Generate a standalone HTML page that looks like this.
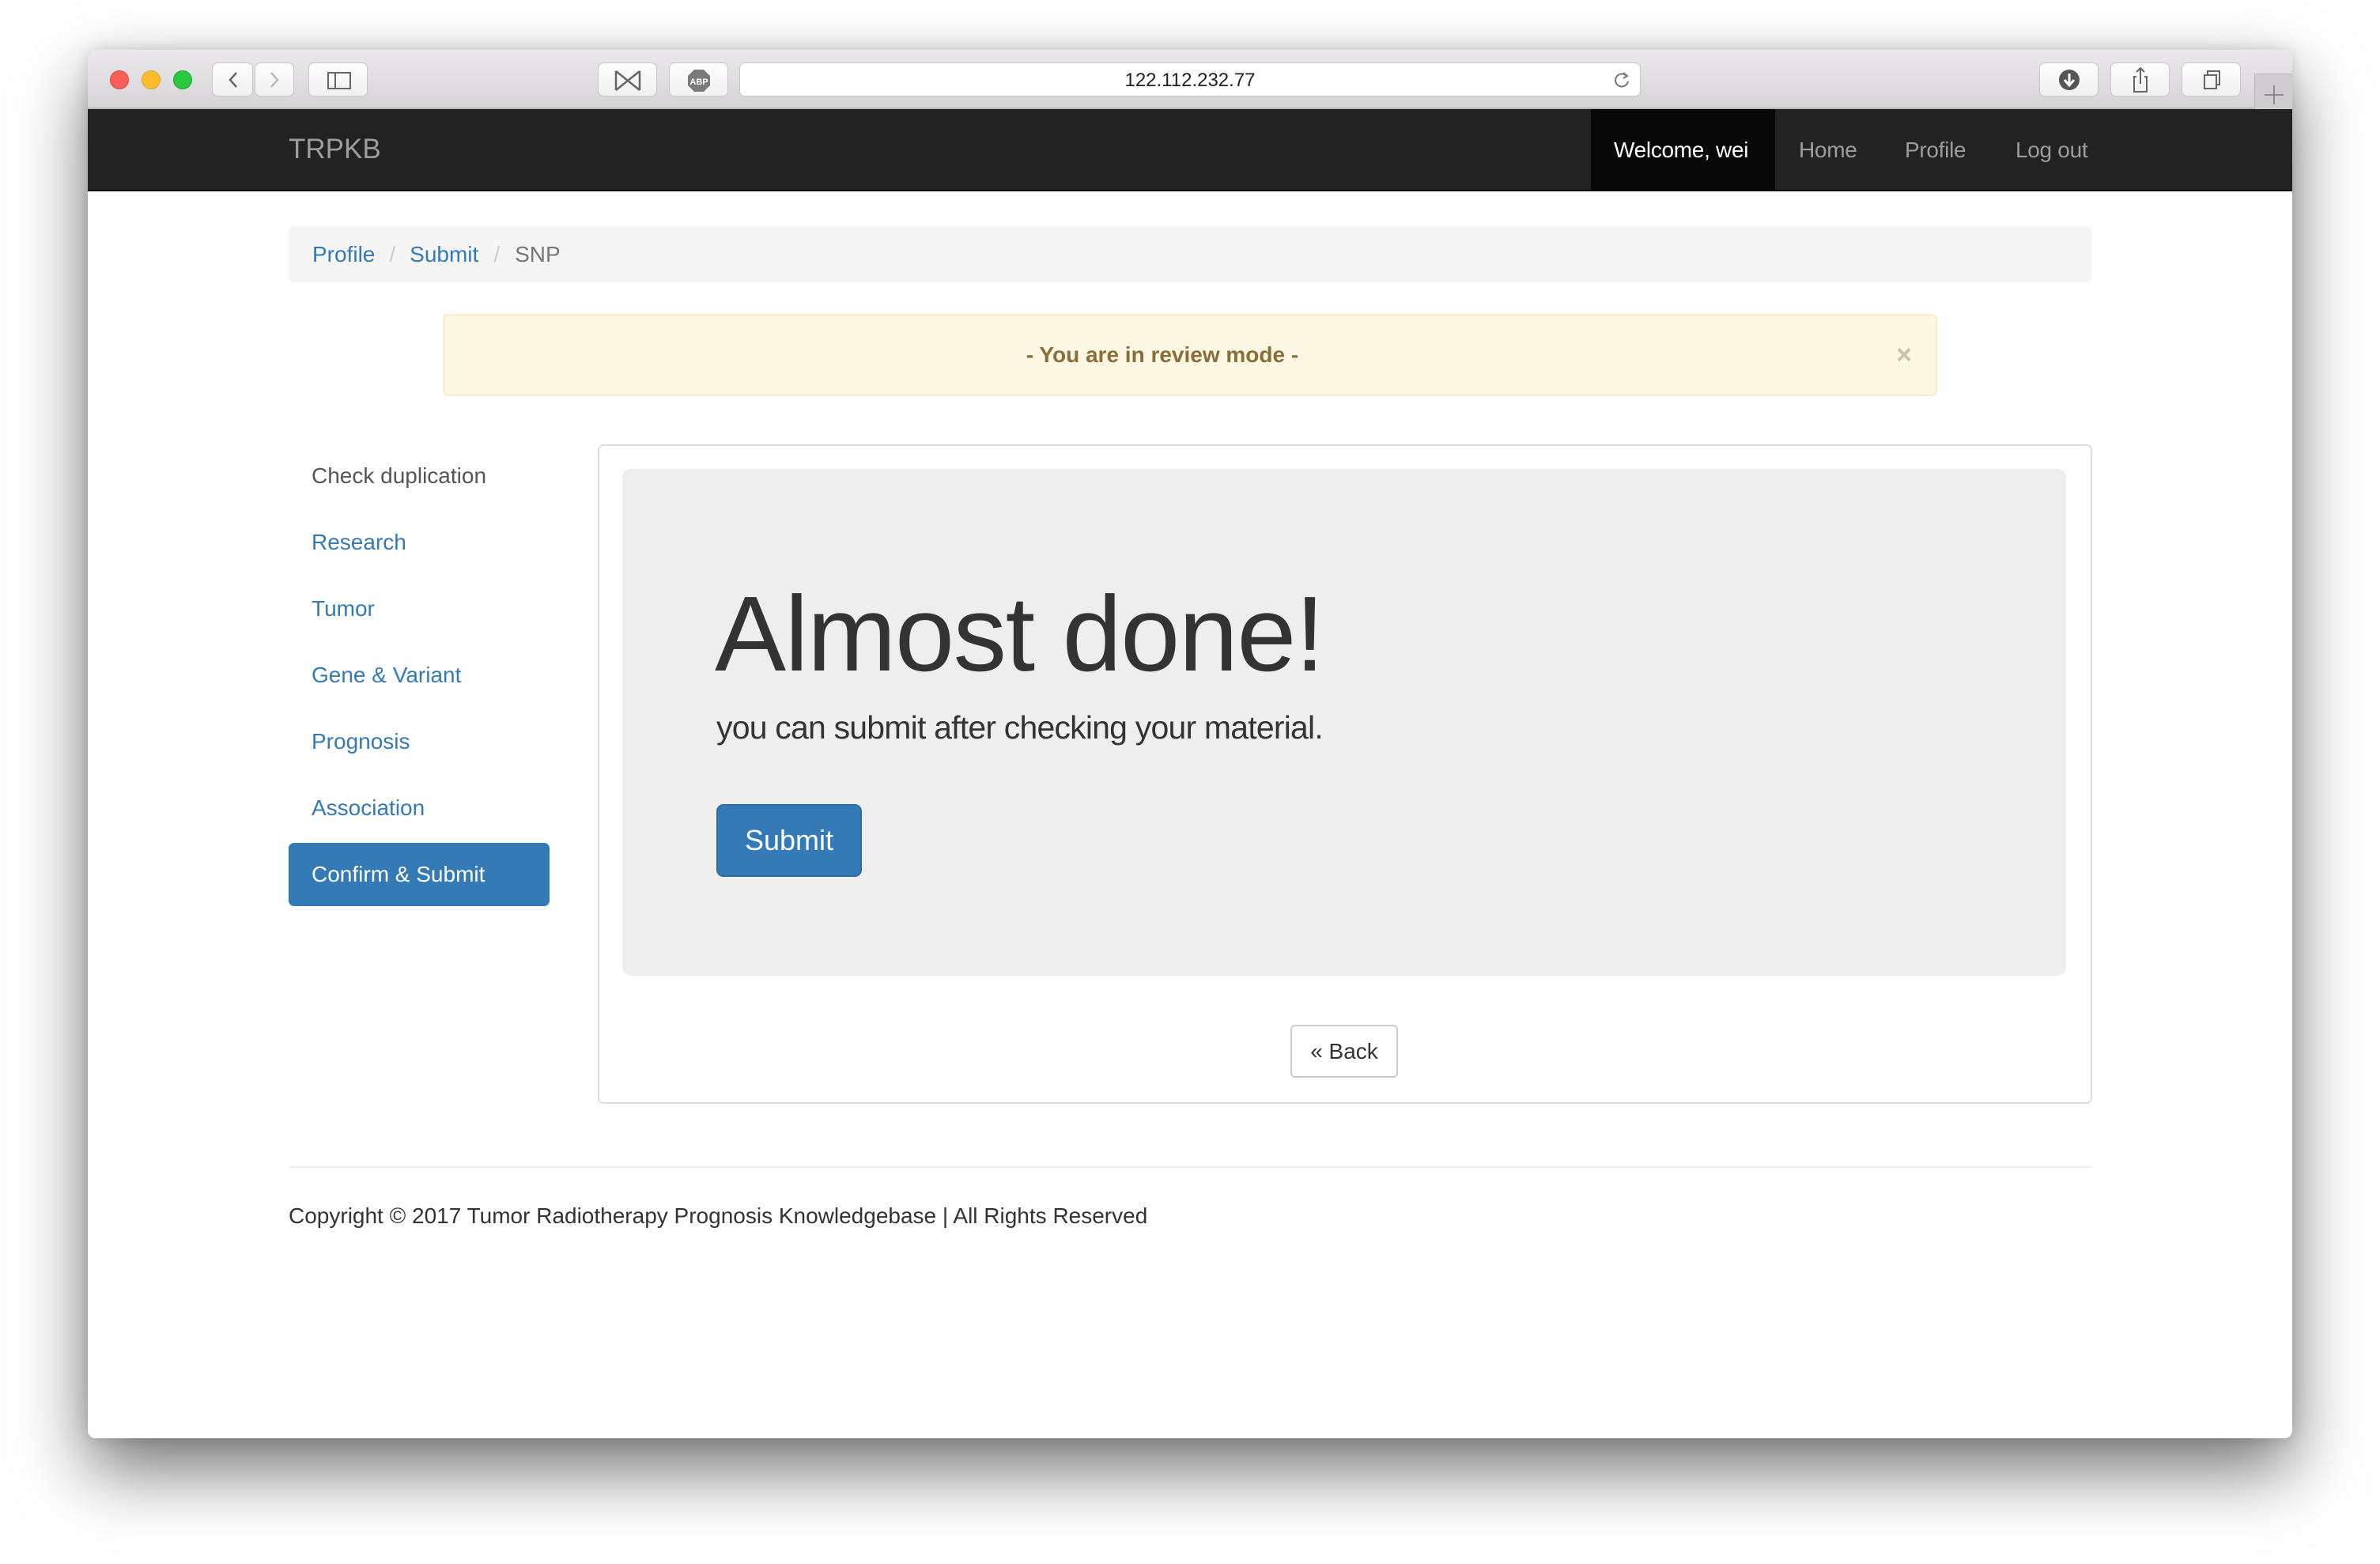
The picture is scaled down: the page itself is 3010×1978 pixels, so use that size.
<!DOCTYPE html>
<html><head><meta charset="utf-8"><style>
*{box-sizing:border-box;margin:0;padding:0}
body{width:3010px;height:1978px;background:#fff;position:relative;overflow:hidden;font-family:"Liberation Sans",Arial,sans-serif;}
.win{position:absolute;left:111px;top:63px;width:2788px;height:1756px;background:#fff;border-radius:10px;box-shadow:0 40px 90px rgba(0,0,0,0.55),0 0 20px rgba(0,0,0,0.15);overflow:hidden}
.tb{position:absolute;left:0;top:0;width:100%;height:75px;background:linear-gradient(#ebe9eb,#d6d4d6);border-bottom:2px solid #b8b6b8}
.dot{position:absolute;top:26px;width:24px;height:24px;border-radius:50%}
.btn{position:absolute;top:16px;height:43px;background:linear-gradient(#fdfdfd,#f1f1f1);border:1px solid #c8c6c8;border-radius:7px}
.abs{position:absolute}
.nav{position:absolute;left:0;top:75px;width:100%;height:104px;background:#222;border-bottom:2px solid #080808}
.a{color:#337ab7}
</style></head><body>
<div class="win">
 <div class="tb">
  <div class="dot" style="left:28px;background:#fc5f57;border:1px solid #e0443e"></div>
  <div class="dot" style="left:68px;background:#fdbc2e;border:1px solid #dea123"></div>
  <div class="dot" style="left:108px;background:#29c840;border:1px solid #1aab29"></div>
  <div class="btn" style="left:157px;width:52px"><svg width="52" height="43"><path d="M30 12 L22 21 L30 30" stroke="#666" stroke-width="2.5" fill="none"/></svg></div>
  <div class="btn" style="left:211px;width:50px"><svg width="50" height="43"><path d="M20 12 L28 21 L20 30" stroke="#bbb" stroke-width="2.5" fill="none"/></svg></div>
  <div class="btn" style="left:279px;width:75px"><svg width="75" height="43"><rect x="24" y="12" width="28" height="20" stroke="#666" stroke-width="2" fill="none"/><line x1="33" y1="12" x2="33" y2="32" stroke="#666" stroke-width="2"/></svg></div>
  <div class="btn" style="left:645px;width:75px"><svg width="75" height="43"><path d="M22 10 L52 34 M52 10 L22 34 M22 10 V34 M52 10 V34" stroke="#666" stroke-width="2.5" fill="none"/></svg></div>
  <div class="btn" style="left:735px;width:75px"><svg width="75" height="43"><polygon points="31,8 43,8 51,16 51,28 43,36 31,36 23,28 23,16" fill="#7a7a7a"/><text x="37" y="27" font-size="11" font-weight="bold" fill="#fff" text-anchor="middle" font-family="Liberation Sans">ABP</text></svg></div>
  <div class="btn" style="left:824px;width:1140px;background:#fff;text-align:center;line-height:43px;font-size:24px;color:#222">122.112.232.77
   <svg class="abs" style="right:10px;top:8px" width="26" height="26"><path d="M19 8 A8 8 0 1 0 21 15" stroke="#777" stroke-width="2" fill="none"/><path d="M15 4 L20 8 L15 11" stroke="#777" stroke-width="2" fill="none"/></svg></div>
  <div class="btn" style="left:2468px;width:75px"><svg width="75" height="43"><circle cx="37" cy="21" r="13" fill="#555"/><path d="M37 13 V27 M31 21 L37 28 L43 21" stroke="#fff" stroke-width="3" fill="none"/></svg></div>
  <div class="btn" style="left:2558px;width:75px"><svg width="75" height="43"><path d="M32 17 H29 V36 H45 V17 H42 M37 6 V26 M32 11 L37 6 L42 11" stroke="#666" stroke-width="2" fill="none"/></svg></div>
  <div class="btn" style="left:2648px;width:75px"><svg width="75" height="43"><rect x="28" y="15" width="15" height="17" stroke="#666" stroke-width="2" fill="none"/><path d="M32 15 V10 H47 V27 H43" stroke="#666" stroke-width="2" fill="none"/></svg></div>
  <div class="abs" style="left:2740px;top:30px;width:48px;height:45px;background:#cfcdcf;border-left:1px solid #b8b6b8;border-top:1px solid #b8b6b8"><svg width="48" height="45"><path d="M24 14 V38 M12 26 H36" stroke="#777" stroke-width="1.5"/></svg></div>
 </div>
 <div class="nav">
  <div class="abs" style="left:254px;top:31px;font-size:35px;color:#9d9d9d">TRPKB</div>
  <div class="abs" style="left:1901px;top:0;width:233px;height:102px;background:#080808"></div>
  <div class="abs" style="left:1930px;top:36px;font-size:28px;color:#fff;letter-spacing:-0.3px">Welcome, wei</div>
  <div class="abs" style="left:2164px;top:36px;font-size:28px;color:#9d9d9d;letter-spacing:-0.3px">Home</div>
  <div class="abs" style="left:2298px;top:36px;font-size:28px;color:#9d9d9d;letter-spacing:-0.3px">Profile</div>
  <div class="abs" style="left:2438px;top:36px;font-size:28px;color:#9d9d9d;letter-spacing:-0.3px">Log out</div>
 </div>
 <div class="abs" style="left:254px;top:223px;width:2280px;height:71px;background:#f5f5f5;border-radius:7px;font-size:28px;line-height:71px;padding-left:30px;color:#777"><span class="a">Profile</span><span style="color:#ccc;padding:0 18px">/</span><span class="a">Submit</span><span style="color:#ccc;padding:0 19px">/</span>SNP</div>
 <div class="abs" style="left:449px;top:334px;width:1890px;height:104px;background:#fcf8e3;border:2px solid #faebcc;border-radius:7px;text-align:center;line-height:100px;font-size:28px;font-weight:bold;color:#8a6d3b;padding-right:70px">- You are in review mode -
  <span class="abs" style="right:30px;top:0;color:#c9c2a8;font-size:34px;font-weight:bold">×</span></div>
 <div class="abs" style="left:283px;top:523px;font-size:28px;color:#555">Check duplication</div>
 <div class="abs a" style="left:283px;top:607px;font-size:28px">Research</div>
 <div class="abs a" style="left:283px;top:691px;font-size:28px">Tumor</div>
 <div class="abs a" style="left:283px;top:775px;font-size:28px">Gene &amp; Variant</div>
 <div class="abs a" style="left:283px;top:859px;font-size:28px">Prognosis</div>
 <div class="abs a" style="left:283px;top:943px;font-size:28px">Association</div>
 <div class="abs" style="left:254px;top:1003px;width:330px;height:80px;background:#337ab7;border-radius:7px;color:#fff;font-size:28px;line-height:80px;padding-left:29px">Confirm &amp; Submit</div>
 <div class="abs" style="left:645px;top:499px;width:1890px;height:834px;border:2px solid #ddd;border-radius:7px"></div>
 <div class="abs" style="left:676px;top:530px;width:1826px;height:641px;background:#eee;border-radius:11px"></div>
 <div class="abs" style="left:793px;top:671px;font-size:135px;color:#333;letter-spacing:-1.5px;line-height:1">Almost done!</div>
 <div class="abs" style="left:795px;top:834px;font-size:41px;color:#333;font-weight:300;letter-spacing:-0.8px">you can submit after checking your material.</div>
 <div class="abs" style="left:795px;top:954px;width:184px;height:92px;background:#337ab7;border:2px solid #2e6da4;border-radius:9px;color:#fff;font-size:36px;line-height:88px;text-align:center">Submit</div>
 <div class="abs" style="left:1521px;top:1233px;width:136px;height:67px;border:2px solid #ccc;border-radius:6px;color:#333;font-size:28px;line-height:63px;text-align:center">« Back</div>
 <div class="abs" style="left:254px;top:1412px;width:2280px;height:2px;background:#eee"></div>
 <div class="abs" style="left:254px;top:1459px;font-size:28px;color:#333">Copyright © 2017 Tumor Radiotherapy Prognosis Knowledgebase | All Rights Reserved</div>
</div>
</body></html>
